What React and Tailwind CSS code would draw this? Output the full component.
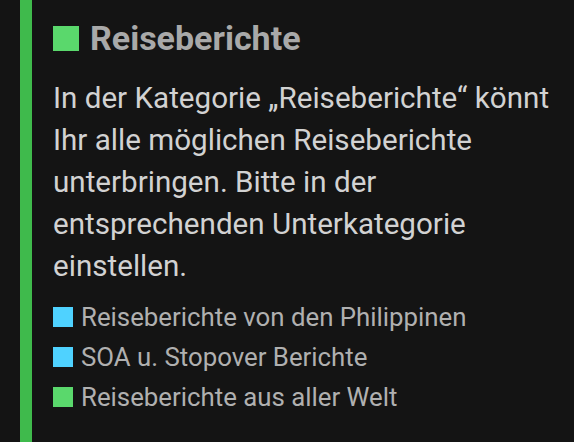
export default function App() {
  const items = [
    { label: "Reiseberichte von den Philippinen", color: "bg-[#4fd2ff]" },
    { label: "SOA u. Stopover Berichte", color: "bg-[#4fd2ff]" },
    { label: "Reiseberichte aus aller Welt", color: "bg-[#5ad86c]" },
  ];

  return (
    <div className="w-[574px] h-[442px] bg-[#141414] flex font-['Roboto',sans-serif] overflow-hidden">
      <div className="w-[12px] ml-[20px] bg-[#3fba4c] shrink-0" />
      <div className="pl-[21px] pt-[18px]">
        <h2 className="flex items-center gap-[11px] text-[34px] font-bold text-[#a9a9a9] leading-[40px]">
          <span className="w-[26px] h-[25px] bg-[#5ad86c]" />
          Reiseberichte
        </h2>
        <p className="mt-[19px] text-[29.6px] leading-[42px] text-[#d2d2d2] w-[515px]">
          In der Kategorie „Reiseberichte“ könnt Ihr alle möglichen Reiseberichte
          unterbringen. Bitte in der entsprechenden Unterkategorie einstellen.
        </p>
        <ul className="mt-[10px] flex flex-col">
          {items.map((it) => (
            <li
              key={it.label}
              className="flex items-center gap-[8px] text-[25.8px] leading-[40px] text-[#b0b0b0]"
            >
              <span className={`w-[20px] h-[20px] ${it.color}`} />
              {it.label}
            </li>
          ))}
        </ul>
      </div>
    </div>
  );
}
